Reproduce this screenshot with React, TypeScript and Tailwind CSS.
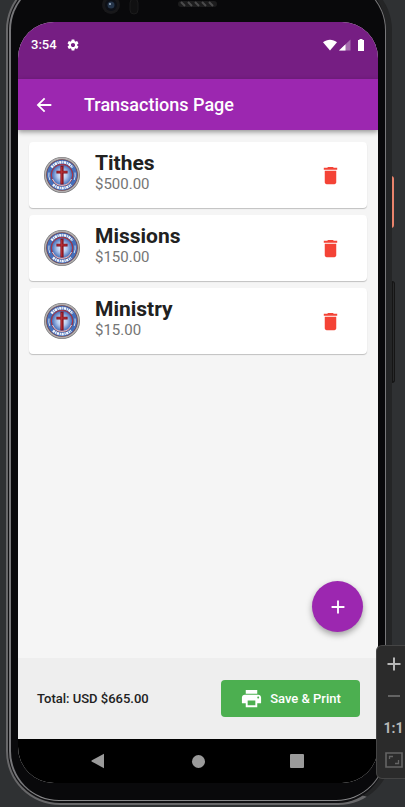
import type { ReactNode } from "react";
import { MdAdd, MdArrowBack, MdDelete, MdPrint, MdSettings } from "react-icons/md";

const transactions = [
  { name: "Tithes", amount: "$500.00" },
  { name: "Missions", amount: "$150.00" },
  { name: "Ministry", amount: "$15.00" },
];

function Emblem() {
  return (
    <svg viewBox="0 0 36 36" className="size-9 shrink-0" aria-hidden="true">
      <defs>
        <radialGradient id="emblem-sky">
          <stop offset="0" stopColor="#f3f7ff" />
          <stop offset="0.45" stopColor="#b4caee" />
          <stop offset="1" stopColor="#3a65b4" />
        </radialGradient>
      </defs>
      <circle cx="18" cy="18" r="18" fill="#737376" />
      <circle cx="18" cy="18" r="16.600" fill="none" stroke="#b3afaf" strokeWidth="1.600" />
      <circle cx="18" cy="18" r="15.600" fill="#7a3646" />
      <circle cx="18" cy="18" r="13.200" fill="none" stroke="#4470bb" strokeWidth="3.800" />
      <path
        d="M7.500 10.500A13 13 0 0 1 28.500 10.500M9 27.500A13 13 0 0 0 27 27.500"
        fill="none"
        stroke="#f4f6fb"
        strokeWidth="2.600"
        strokeDasharray="2.200 0.700 1.200 0.600"
      />
      <path d="M5 15.500a13.200 13.200 0 0 0 .8 7.500M31 15.500a13.200 13.200 0 0 1-.8 7.500" fill="none" stroke="#e6eaf3" strokeWidth="0.900" />
      <circle cx="18" cy="18" r="10.600" fill="url(#emblem-sky)" stroke="#a93648" strokeWidth="1" />
      <path d="M8.500 22a10.300 10.300 0 0 0 19 0" fill="none" stroke="#e4e8f2" strokeWidth="0.900" />
      <path d="M16.400 8.500h3.200v5.300h4v2.800h-4V27.500h-3.200V16.600h-4v-2.800h4z" fill="#861520" />
      <path d="M17.200 10h1v16.500h-1zM13.300 14.600h9.400v0.800h-9.400z" fill="#bd3337" />
    </svg>
  );
}

function StatusBar() {
  return (
    <div className="flex h-[57px] items-start justify-between bg-[#761e83] px-[13px] pt-[15px] text-white">
      <div className="flex h-4 items-center gap-[9px] text-[13px] font-medium">
        <span>3:54</span>
        <MdSettings size={14} />
      </div>
      <div className="flex h-4 items-center gap-[2px]">
        <svg viewBox="0 0 14 12" className="h-3 w-3.5" fill="currentColor">
          <path d="M0 3.200C4-.2 10-.2 14 3.200L7 11.500z" />
        </svg>
        <svg viewBox="0 0 12 12" className="size-3" fill="currentColor">
          <path d="M11.500.5v11H0z" opacity="0.35" />
          <path d="M6.500 5.300v6.200H0z" />
        </svg>
        <svg viewBox="0 0 8 12" className="ml-1 h-3 w-2" fill="currentColor">
          <path d="M2.500 0h3v1H7v11H1V1h1.500z" />
        </svg>
      </div>
    </div>
  );
}

function AppBar() {
  return (
    <header className="relative flex h-[51px] items-center gap-[29px] bg-[#9c27b0] px-[15px] text-white shadow-[0_2px_5px_rgba(0,0,0,0.4)]">
      <button type="button" aria-label="Back">
        <MdArrowBack size={22} />
      </button>
      <h1 className="text-[18px] font-medium">Transactions Page</h1>
    </header>
  );
}

function TransactionCard({ name, amount }: { name: string; amount: string }) {
  return (
    <li className="flex h-[66px] items-center rounded bg-white pl-[15px] pr-[25px] shadow-[0_1px_1px_rgba(0,0,0,0.22)]">
      <Emblem />
      <div className="ml-[15px] flex-1 pb-1.5">
        <h2 className="text-[21px] leading-6 font-bold text-[#212121]">{name}</h2>
        <p className="text-[15px] leading-[18px] text-[#757575]">{amount}</p>
      </div>
      <button type="button" aria-label={`Delete ${name}`} className="text-[#f44336]">
        <MdDelete size={23} />
      </button>
    </li>
  );
}

function NavigationBar() {
  return (
    <nav className="flex h-11 items-center justify-between bg-black pr-[74px] pl-[72px] text-[#9a9a9a]">
      <button type="button" aria-label="System back">
        <svg viewBox="0 0 16 16" className="size-4" fill="currentColor">
          <path d="M14 .8v14.400L1.500 8.400v-.8z" />
        </svg>
      </button>
      <button type="button" aria-label="Home" className="size-[13px] rounded-full bg-[#9a9a9a]" />
      <button type="button" aria-label="Recent apps" className="size-3.5 rounded-[1px] bg-[#9a9a9a]" />
    </nav>
  );
}

function ZoomButton({ label, children }: { label: string; children: ReactNode }) {
  return (
    <button type="button" aria-label={label} className="flex h-8 w-full items-center justify-center">
      {children}
    </button>
  );
}

function ZoomPanel() {
  return (
    <div className="absolute right-0 bottom-7 flex w-[29px] flex-col rounded-l-md border border-r-0 border-[#454545] bg-[#2b2b2b] py-[2px] pl-[5px] text-[#b8b8b8]">
      <ZoomButton label="Zoom in">
        <svg viewBox="0 0 14 14" className="size-3.5" stroke="currentColor" strokeWidth="2">
          <path d="M7 .5v13M.5 7h13" />
        </svg>
      </ZoomButton>
      <ZoomButton label="Zoom out">
        <svg viewBox="0 0 14 14" className="size-3.5" stroke="#636363" strokeWidth="2">
          <path d="M1 7h12" />
        </svg>
      </ZoomButton>
      <button type="button" className="flex h-8 w-full items-center justify-center text-[14px] font-bold">
        1:1
      </button>
      <ZoomButton label="Fit to window">
        <svg viewBox="0 0 18 16" className="h-4 w-[18px] shrink-0" fill="none" stroke="#646464">
          <path d="M1 1h16v14H1z" strokeWidth="1.600" />
          <path d="M4.500 7V4.500H8M13.500 8v3.500H10" strokeWidth="1.300" />
        </svg>
      </ZoomButton>
    </div>
  );
}

export default function App() {
  return (
    <div className="relative flex min-h-screen flex-col overflow-hidden bg-[#2f3133] font-['Roboto','Liberation_Sans',sans-serif]">
      <div className="absolute top-[176px] right-[11px] h-[52px] w-[3px] rounded-r-sm bg-[#e9836c]" />
      <div className="absolute top-[281px] right-[10px] h-[102px] w-[3px] rounded-r-sm border border-[#151515] bg-[#292a2b]" />
      <div className="relative -mt-6 mr-[13px] mb-[2px] ml-[6px] flex flex-1 flex-col rounded-[54px] border-2 border-r-[6px] border-[#68686a] border-r-[#242526] bg-[#111113]">
        <div className="my-[2px] ml-[1px] flex flex-1 flex-col rounded-[50px] border border-l-2 border-[#555557] border-r-[#777779] border-b-[#88888a] border-l-[#77777a] bg-[#09090b] pt-[41px] pr-[7px] pb-[17px] pl-[7px]">
          <svg viewBox="0 0 120 18" className="absolute top-[20px] left-[93px] h-[18px] w-[120px]" aria-hidden="true">
            <circle cx="10" cy="7" r="9" fill="#18181a" />
            <circle cx="10" cy="7" r="6" fill="#0d1017" />
            <circle cx="10" cy="7" r="3.500" fill="#25354a" />
            <circle cx="9" cy="6" r="1" fill="#a2b4cb" />
            <rect x="29" y="1" width="8" height="15" rx="4" fill="#101011" stroke="#1b1b1c" />
            <rect x="77" y="3" width="39" height="6" rx="3" fill="#1c1c1d" />
            <path d="M80 4l4 4M87 4l4 4M94 4l4 4M101 4l4 4M108 4l4 4" stroke="#4b4b4c" strokeWidth="2" />
          </svg>
          <div className="flex flex-1 flex-col overflow-hidden rounded-[36px] bg-[#f5f5f5]">
            <StatusBar />
            <AppBar />
            <main className="relative flex-1 px-[11px] pt-3 pb-20">
              <ul className="flex flex-col gap-[7px]">
                {transactions.map((item) => (
                  <TransactionCard key={item.name} {...item} />
                ))}
              </ul>
              <button
                type="button"
                aria-label="Add transaction"
                className="absolute right-[15px] bottom-[26px] flex size-[51px] items-center justify-center rounded-full bg-[#9c27b0] text-white shadow-[0_3px_6px_rgba(0,0,0,0.35)]"
              >
                <MdAdd size={22} />
              </button>
            </main>
            <footer className="flex h-[81px] items-center justify-between bg-[#eeeeee] pr-[18px] pl-[19px] text-[13px] font-medium">
              <p className="text-[#212121]">Total: USD $665.00</p>
              <button
                type="button"
                className="flex h-[37px] w-[139px] items-center justify-center gap-[7px] rounded bg-[#4caf50] text-white"
              >
                <MdPrint size={23} />
                Save &amp; Print
              </button>
            </footer>
            <NavigationBar />
          </div>
        </div>
      </div>
      <ZoomPanel />
    </div>
  );
}
